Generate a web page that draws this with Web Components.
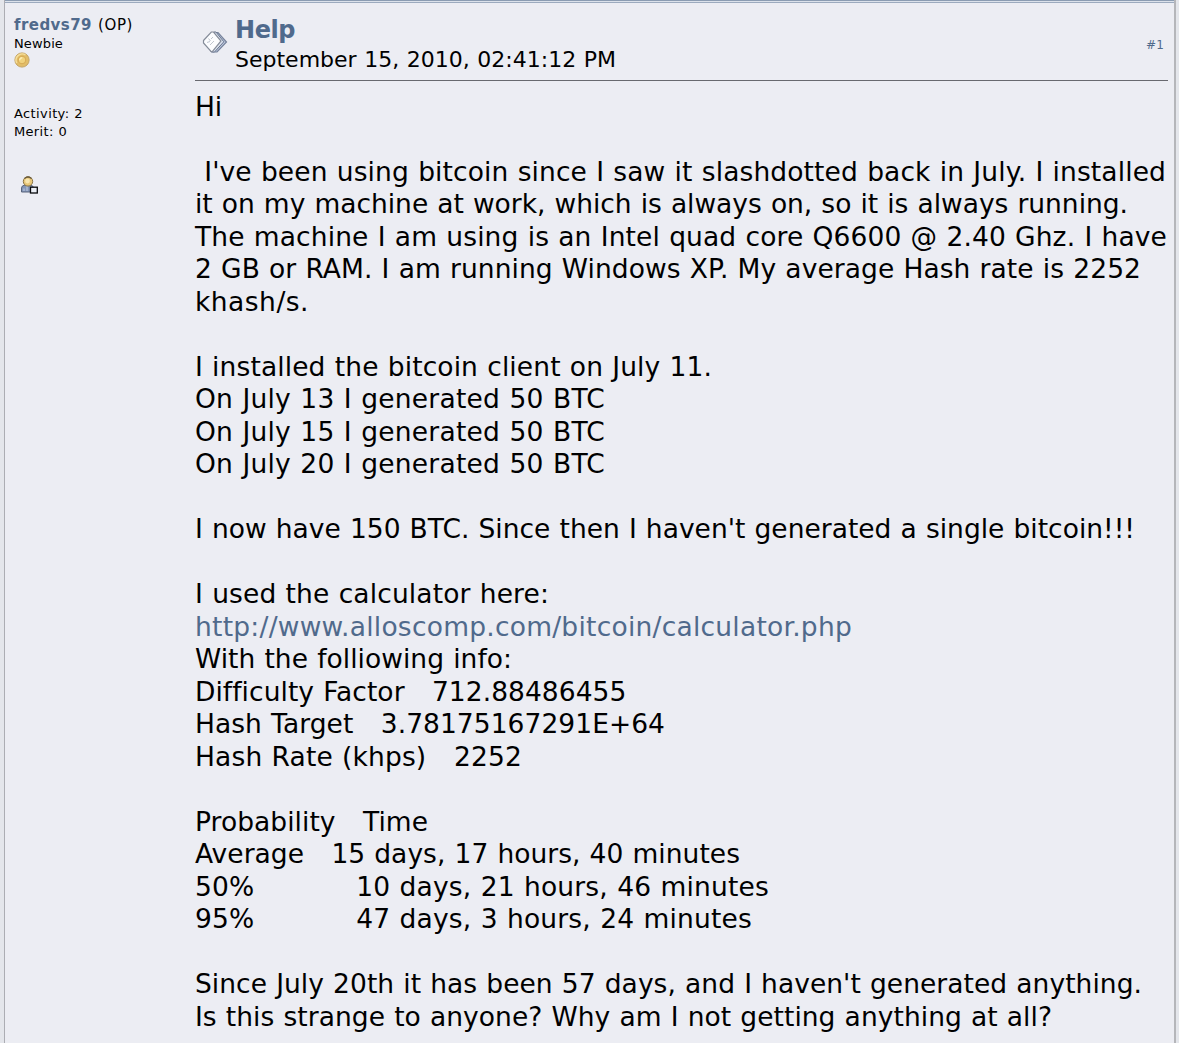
<!DOCTYPE html>
<html lang="en">
<head>
<meta charset="utf-8">
<title>Help</title>
<style>
    html, body {
        margin: 0;
        height: 100%;
        overflow: hidden;
        background: #e4e6eb;
    }
    body {
        font-family: Verdana, "DejaVu Sans", sans-serif;
        color: #000;
    }
</style>
</head>
<body>
<forum-post>
    <post-author slot="author"></post-author>
    <post-header slot="header"></post-header>
    <post-body slot="body"></post-body>
</forum-post>

<script>
// One unwrapped line of text, tracked out to the given width
class TextLine extends HTMLElement {
    constructor() {
        super();
        this.attachShadow({ mode: 'open' });
    }

    connectedCallback() {
        this.shadowRoot.innerHTML = `
            <style>
                :host { display: block; white-space: pre; }
                span { display: inline-block; word-spacing: 0.025em; }
            </style>
            <span><slot></slot></span>
        `.replace(/>\s+</g, '><').trim();
        const width = Number(this.getAttribute('width'));
        const length = this.textContent.length;
        if (!width || !length) return;
        const span = this.shadowRoot.querySelector('span');
        const spare = width - span.getBoundingClientRect().width;
        span.style.letterSpacing = `${spare / length}px`;
    }
}

class ForumPost extends HTMLElement {
    constructor() {
        super();
        this.attachShadow({ mode: 'open' });
        this.shadowRoot.innerHTML = `
            <style>
                :host {
                    display: flex;
                    flex-direction: column;
                    box-sizing: border-box;
                    height: 1043px;
                    width: 1172px;
                    margin-left: 4px;
                    border-left: 1px solid #acadb3;
                    border-right: 2px solid #b5b6ba;
                    background: #ecedf3;
                }
                .rule {
                    flex: none;
                    height: 1px;
                    border-top: 1px solid #8b9cb2;
                    border-bottom: 1px solid #9caabe;
                    background: #dce2eb;
                }
                .columns { display: flex; flex: 1; }
                .author { width: 180px; padding-left: 10px; box-sizing: border-box; }
                .main { width: 973px; margin-left: 10px; }
            </style>
            <div class="rule"></div>
            <div class="columns">
                <div class="author"><slot name="author"></slot></div>
                <div class="main">
                    <slot name="header"></slot>
                    <slot name="body"></slot>
                </div>
            </div>
        `;
    }
}

class PostAuthor extends HTMLElement {
    constructor() {
        super();
        this.attachShadow({ mode: 'open' });
        this.shadowRoot.innerHTML = `
            <style>
                :host { display: block; padding-top: 12px; font-size: 13px; line-height: 18px; margin-left: -1px; }
                .name { display: flex; gap: 6px; font-size: 15px; line-height: 20px; }
                .name a { color: #506a8c; font-weight: bold; }
                svg { display: block; }
                .coin { margin-top: -1px; }
                .stats { margin-top: 37px; }
                .status { margin: 34px 0 0 6px; }
            </style>
            <div class="name">
                <a><text-line width="78">fredvs79</text-line></a>
                <text-line width="35">(OP)</text-line>
            </div>
            <text-line width="49">Newbie</text-line>
            <svg class="coin" width="16" height="16" viewBox="0 0 16 16">
                <circle cx="8" cy="8" r="7.1" fill="#e2bd68" stroke="#c3a466"/>
                <path d="M2.8 11A6.1 6.1 0 0 1 11.5 3" fill="none" stroke="#f6df9b" stroke-width="1.4"/>
                <circle cx="8" cy="8" r="3.8" fill="#f0d27d" stroke="#d0a14b" stroke-width=".8"/>
                <path d="M5.7 8.2A2.4 2.4 0 0 1 8.2 5.8" fill="none" stroke="#fbeeb5" stroke-width="1.5"/>
            </svg>
            <div class="stats">
                <text-line width="69">Activity: 2</text-line>
                <text-line width="53">Merit: 0</text-line>
            </div>
            <svg class="status" width="20" height="20" viewBox="0 0 20 20">
                <path d="M1.5 17V13Q1.5 10.5 5 10H10Q13.5 10.5 13.5 13V17Z" fill="#8496b8" stroke="#58647c"/>
                <path d="M4 16V13.5M7 11V16" stroke="#acbbd3" stroke-width="1.5"/>
                <circle cx="8" cy="6.4" r="4.7" fill="#e8c779" stroke="#8a7546"/>
                <path d="M4.5 3.6Q8 .2 11.5 3.6" fill="none" stroke="#6b5c3c" stroke-width="1.4"/>
                <circle cx="7.5" cy="6" r="2.4" fill="#f8e6ae"/>
                <rect x="10.5" y="12.2" width="6.8" height="5.8" fill="#ebeff6" stroke="#08090c" stroke-width="1.3"/>
            </svg>
        `;
    }
}

class PostHeader extends HTMLElement {
    constructor() {
        super();
        this.attachShadow({ mode: 'open' });
        this.shadowRoot.innerHTML = `
            <style>
                :host {
                    display: flex;
                    align-items: center;
                    box-sizing: border-box;
                    height: 78px;
                    border-bottom: 1px solid #68696f;
                }
                svg { flex: none; margin: 0 7px 0 7px; }
                .title { flex: 1; padding-top: 6px; }
                .subject { color: #506a8c; font-size: 24px; font-weight: bold; line-height: 30px; }
                .date { font-size: 22px; line-height: 30px; }
                .number { color: #506a8c; font-size: 12px; margin: 7px 4px 0 0; }
            </style>
            <svg width="26" height="26" viewBox="0 0 26 26">
                <path d="M12 3.5H16L24.5 13L15 23H11Z" fill="#bac6dc" stroke="#77839b" stroke-width="1.2"/>
                <path d="M12 3H14L21.8 12.8L12.5 23H9Z" fill="#dbe2ef" stroke="#68758d"/>
                <path d="M1.5 11.5L9.3 3H11.5L19 12L10.5 22.5H9L1.5 14Z" fill="#fcfdff" stroke="#858c99" stroke-width="1.2"/>
                <path d="M6.5 9.5L8.5 12M5 13.5L8 12.5M9 10L11 8M8 16L12 12" fill="none" stroke="#bfc5ce"/>
            </svg>
            <div class="title">
                <text-line class="subject" width="60">Help</text-line>
                <text-line class="date" width="381">September 15, 2010, 02:41:12 PM</text-line>
            </div>
            <text-line class="number" width="18">#1</text-line>
        `;
    }
}

const LINES = [
    ['Hi', 27],
    [''],
    [" I've been using bitcoin since I saw it slashdotted back in July. I installed", 971],
    ['it on my machine at work, which is always on, so it is always running.', 933],
    ['The machine I am using is an Intel quad core Q6600 @ 2.40 Ghz. I have', 972],
    ['2 GB or RAM. I am running Windows XP. My average Hash rate is 2252', 946],
    ['khash/s.', 114],
    [''],
    ['I installed the bitcoin client on July 11.', 517],
    ['On July 13 I generated 50 BTC', 410],
    ['On July 15 I generated 50 BTC', 410],
    ['On July 20 I generated 50 BTC', 410],
    [''],
    ["I now have 150 BTC. Since then I haven't generated a single bitcoin!!!", 940],
    [''],
    ['I used the calculator here:', 354],
    ['http://www.alloscomp.com/bitcoin/calculator.php', 657, 'link'],
    ['With the folliowing info:', 317],
    ['Difficulty Factor   712.88486455', 431],
    ['Hash Target   3.78175167291E+64', 470],
    ['Hash Rate (khps)   2252', 327],
    [''],
    ['Probability   Time', 233],
    ['Average   15 days, 17 hours, 40 minutes', 545],
    ['50%           10 days, 21 hours, 46 minutes', 574],
    ['95%           47 days, 3 hours, 24 minutes', 557],
    [''],
    ["Since July 20th it has been 57 days, and I haven't generated anything.", 947],
    ['Is this strange to anyone? Why am I not getting anything at all?', 857],
];

class PostBody extends HTMLElement {
    constructor() {
        super();
        this.attachShadow({ mode: 'open' });
        this.shadowRoot.innerHTML = `
            <style>
                :host { display: block; padding-top: 9.5px; font-size: 26.5px; line-height: 32.5px; }
                text-line { height: 32.5px; }
                .link { color: #506a8c; }
            </style>
            ${LINES.map(([text, width = 0, name = '']) =>
                `<text-line class="${name}" width="${width}">${text}</text-line>`).join('')}
        `;
    }
}

customElements.define('text-line', TextLine);
customElements.define('forum-post', ForumPost);
customElements.define('post-author', PostAuthor);
customElements.define('post-header', PostHeader);
customElements.define('post-body', PostBody);
</script>
</body>
</html>
